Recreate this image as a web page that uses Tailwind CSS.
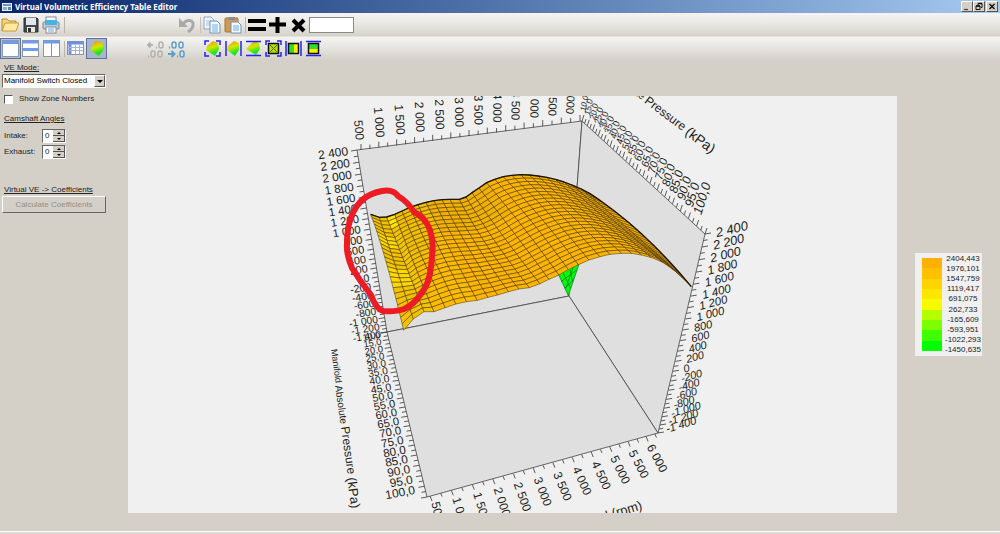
<!DOCTYPE html>
<html lang="en">

<head>
    <meta charset="UTF-8">
    <meta name="viewport" content="width=device-width, initial-scale=1.0">
    <title>Virtual Volumetric Efficiency Table Editor</title>
    <script src="https://cdn.jsdelivr.net/npm/@tailwindcss/browser@4"></script>
</head>

<body class="flex min-h-screen flex-col bg-[#d4d0c8] font-['Liberation_Sans',sans-serif] text-[9px] leading-3 text-[#222]">

    <!-- Title bar -->
    <header class="flex h-[13px] items-center bg-linear-to-r from-[#0a246a] to-[#a6caf0] pr-[2px] pl-[2px]">
        <svg class="mr-[3px] h-[10px] w-[10px]" viewBox="0 0 10 10">
            <rect x="0" y="1" width="10" height="8" fill="#e8eef6" />
            <rect x="1" y="2" width="8" height="2" fill="#6f93c8" />
            <rect x="1" y="5" width="4" height="3" fill="#8fa9cc" />
            <rect x="6" y="5" width="3" height="3" fill="#5b82bb" />
        </svg>
        <h1 class="grow font-['Noto_Sans','Open_Sans',sans-serif] text-[8px] font-bold text-white">Virtual Volumetric Efficiency Table Editor</h1>
        <button aria-label="Minimize" class="h-[11px] w-[12px] border border-t-white border-r-[#555] border-b-[#555] border-l-white bg-[#d4d0c8]">
            <svg class="h-full w-full" viewBox="0 0 10 9"><path d="M2 7.5h4" stroke="#444" stroke-width="1.2" /></svg>
        </button>
        <button aria-label="Restore" class="h-[11px] w-[12px] border border-t-white border-r-[#555] border-b-[#555] border-l-white bg-[#d4d0c8]">
            <svg class="h-full w-full" viewBox="0 0 10 9" fill="none" stroke="#111"><path d="M4 3V1.5h4v4H7M2 4h4v3.500H2z" /><path d="M2 4h4M4 1.500h4" stroke-width="1.500" /></svg>
        </button>
        <button aria-label="Close" class="ml-[1px] h-[11px] w-[12px] border border-t-white border-r-[#555] border-b-[#555] border-l-white bg-[#d4d0c8]">
            <svg class="h-full w-full" viewBox="0 0 10 9" stroke="#111" stroke-width="1.500"><path d="M2.500 2l5 5M7.500 2l-5 5" /></svg>
        </button>
    </header>

    <!-- Edit toolbar -->
    <div class="flex h-6 items-center border-b border-[#e4e1da] bg-linear-to-b from-[#f5f4f1] via-[#e9e7e2] to-[#d6d2ca]">
        <button aria-label="Open" class="ml-[1px] h-[18px] w-[18px]">
            <svg viewBox="0 0 18 18"><path d="M1 15V3h5l2 2h7v3" fill="#f5d67a" stroke="#b98a2c" /><path d="M1 15l3-8h14l-3 8z" fill="#ffe9a0" stroke="#c79a3a" /></svg>
        </button>
        <button aria-label="Save" class="ml-[3px] h-[18px] w-[18px]">
            <svg viewBox="0 0 18 18"><path d="M2 2h13l1 1v13H2z" fill="#45474c" stroke="#2c2d31" /><rect x="4" y="2" width="10" height="7" fill="#dfe6f2" /><rect x="5" y="11" width="8" height="5" fill="#e6e6e6" /><rect x="6" y="12" width="3" height="4" fill="#333" /></svg>
        </button>
        <button aria-label="Print" class="ml-[2px] h-[18px] w-[18px]">
            <svg viewBox="0 0 18 18"><rect x="4" y="1" width="10" height="6" fill="#fff" stroke="#889" /><rect x="1" y="6" width="16" height="7" rx="1" fill="#c3cad4" stroke="#7b8595" /><rect x="3" y="4" width="12" height="5" fill="#45b5e0" /><rect x="4" y="11" width="10" height="6" fill="#fff" stroke="#889" /><path d="M6 13h6M6 15h6" stroke="#6aa5da" /></svg>
        </button>
        <span class="ml-1 h-4 w-px bg-[#b9b5ac]"></span>
        <button aria-label="Undo" class="ml-[113px] h-[18px] w-[18px]">
            <svg viewBox="0 0 18 18"><path d="M4 9C9 2 16 4 15 9c0 3-2 5-5 7" fill="none" stroke="#a9a9a9" stroke-width="3" /><path d="M1 2v9h9z" fill="#a9a9a9" /></svg>
        </button>
        <span class="ml-1 h-4 w-px bg-[#c4c0b8]"></span>
        <button aria-label="Copy" class="ml-[2px] h-[18px] w-[18px]">
            <svg viewBox="0 0 18 18"><path d="M1 1h7l3 3v9H1z" fill="#eef4fb" stroke="#8fa5c0" /><path d="M3 5h6M3 7h6M3 9h6" stroke="#a9c7e6" /><path d="M7 5h7l3 3v9H7z" fill="#f4f9ff" stroke="#7592b4" /><path d="M9 9h6M9 11h6M9 13h6M9 15h6" stroke="#6daee2" /></svg>
        </button>
        <button aria-label="Paste" class="ml-[3px] h-[18px] w-[18px]">
            <svg viewBox="0 0 18 18"><rect x="1" y="2" width="13" height="14" rx="1" fill="#cf9a55" stroke="#a97430" /><rect x="4" y="1" width="7" height="3" fill="#8d8d8d" /><path d="M7 6h7l3 3v8H7z" fill="#f4f9ff" stroke="#7592b4" /><path d="M9 10h6M9 12h6M9 14h6" stroke="#6daee2" /></svg>
        </button>
        <span class="ml-[3px] h-4 w-px bg-[#b9b5ac]"></span>
        <button aria-label="Set equal" class="ml-[2px] h-[18px] w-[18px]">
            <svg viewBox="0 0 18 18"><path d="M0 5h18M0 13h18" stroke="#000" stroke-width="4" /></svg>
        </button>
        <button aria-label="Add" class="ml-[3px] h-[18px] w-[18px]">
            <svg viewBox="0 0 18 18"><path d="M8.500 1v16M0 8.500h17" stroke="#000" stroke-width="4" /></svg>
        </button>
        <button aria-label="Multiply" class="ml-[3px] h-[18px] w-[18px]">
            <svg viewBox="0 0 18 18"><path d="M3 4l11 11M14 4L3 15" stroke="#000" stroke-width="4" /></svg>
        </button>
        <input aria-label="Value" type="text" class="ml-[1px] h-4 w-[45px] border border-[#8a8a8a] bg-white px-1 outline-none">
    </div>

    <!-- View toolbar -->
    <div class="flex h-[23px] items-center bg-linear-to-b from-[#f5f4f1] via-[#e6e4df] to-[#d4d0c8]">
        <button aria-label="Single view" aria-pressed="true" class="h-[21px] w-[21px] border border-[#5d7199] bg-[#b5bfd6] p-[1px]">
            <svg viewBox="0 0 17 17"><rect x=".5" y=".5" width="16" height="16" fill="#fdfdfd" stroke="#8797b5" /><rect x="1" y="1" width="15" height="3" fill="#6f9bea" /></svg>
        </button>
        <button aria-label="Split rows" class="ml-[1px] h-[17px] w-[17px]">
            <svg viewBox="0 0 17 17"><rect x=".5" y=".5" width="16" height="16" fill="#fdfdfd" stroke="#8f96a3" /><path d="M1 2h15M1 9.500h15" stroke="#6f9bea" stroke-width="3" /></svg>
        </button>
        <button aria-label="Split columns" class="ml-1 h-[17px] w-[17px]">
            <svg viewBox="0 0 17 17"><rect x=".5" y=".5" width="16" height="16" fill="#fdfdfd" stroke="#8f96a3" /><path d="M1 2h15" stroke="#6f9bea" stroke-width="3" /><path d="M8.500 1v15" stroke="#8f96a3" /></svg>
        </button>
        <span class="ml-1 h-4 w-px bg-[#b9b5ac]"></span>
        <button aria-label="Table" class="ml-[2px] h-[17px] w-[17px]">
            <svg viewBox="0 0 17 17"><rect x=".5" y="1.500" width="16" height="13" fill="#fff" stroke="#8492b5" /><path d="M1 3h15M3 2v12" stroke="#6f8fe0" stroke-width="3" /><path d="M1 7.500h15M1 10.500h15M8.500 5v9M12.500 5v9" stroke="#a3b2d6" /></svg>
        </button>
        <button aria-label="Surface" aria-pressed="true" class="ml-[2px] h-[21px] w-[21px] border border-[#5d7199] bg-[#a9b4cd] p-[1px]">
            <svg viewBox="0 0 17 17">
                <defs>
                    <linearGradient id="heat" x1="0" y1="0" x2=".3" y2="1"><stop offset=".1" stop-color="#f09a00" /><stop offset=".5" stop-color="#cfe800" /><stop offset=".9" stop-color="#1ee41e" /></linearGradient>
                </defs>
                <path d="M7 1l7 1 2 7-5 7-9-6z" fill="url(#heat)" />
            </svg>
        </button>
        <button aria-label="Fewer decimals" class="ml-10 h-[18px] w-[17px]">
            <svg viewBox="0 0 17 18" fill="none" stroke="#b4b2ad" stroke-width="1.500"><path d="M6 5H1M3.500 2.500L1 5l2.500 2.500M9 7.500h1" stroke-width="2" /><rect x="12" y="2" width="4" height="6" rx="2" /><path d="M1 16.500h1" stroke-width="2" /><rect x="4" y="11" width="4" height="6" rx="2" /><rect x="11" y="11" width="4" height="6" rx="2" /></svg>
        </button>
        <button aria-label="More decimals" class="ml-1 h-[18px] w-[17px]">
            <svg viewBox="0 0 17 18" fill="none" stroke="#5a9fcb" stroke-width="1.500"><path d="M1 7.500h1" stroke-width="2" /><rect x="4" y="2" width="4" height="6" rx="2" /><rect x="11" y="2" width="4" height="6" rx="2" /><path d="M0 14h6M3.500 11L6.500 14l-3 3M9 16.500h1" stroke-width="2" /><rect x="12" y="11" width="4" height="6" rx="2" /></svg>
        </button>
        <button aria-label="Fit surface" class="ml-[19px] h-[17px] w-[17px]">
            <svg viewBox="0 0 17 17"><path d="M9 1l5 2 1 6-4 7-9-6 1-4z" fill="url(#heat)" /><path d="M1 5V1h4M12 1h4v4M16 12v4h-4M5 16H1v-4" fill="none" stroke="#22f" stroke-width="1.500" /></svg>
        </button>
        <button aria-label="Fit surface width" class="ml-1 h-[17px] w-[17px]">
            <svg viewBox="0 0 17 17"><path d="M9 1l5 2v7l-4 6-8-6 1-4z" fill="url(#heat)" /><path d="M1 1v15M16 1v15" stroke="#22f" stroke-width="1.500" /></svg>
        </button>
        <button aria-label="Fit surface height" class="ml-[3px] h-[17px] w-[17px]">
            <svg viewBox="0 0 17 17"><path d="M9 1l5 2 1 6-4 6-10-6z" fill="url(#heat)" /><path d="M1 1.500h15M1 15.500h15" stroke="#22f" stroke-width="1.500" /></svg>
        </button>
        <button aria-label="Fit table" class="ml-[3px] h-[17px] w-[17px]">
            <svg viewBox="0 0 17 17"><rect x="3.500" y="3.500" width="10" height="10" fill="#9be800" stroke="#111" stroke-width="1.500" /><path d="M5 5l7 7M12 5l-7 7" stroke="#a44800" /><path d="M1 5V1h4M12 1h4v4M16 12v4h-4M5 16H1v-4" fill="none" stroke="#22f" stroke-width="1.500" /></svg>
        </button>
        <button aria-label="Fit table width" class="ml-[3px] h-[17px] w-[17px]">
            <svg viewBox="0 0 17 17"><rect x="3.500" y="3.500" width="10" height="10" fill="#fe0" /><path d="M4 4h5v9H4z" fill="#2be02b" /><rect x="3.500" y="3.500" width="10" height="10" fill="none" stroke="#111" stroke-width="1.500" /><path d="M1 1v15M16 1v15" stroke="#22f" stroke-width="1.500" /></svg>
        </button>
        <button aria-label="Fit table height" class="ml-[3px] h-[17px] w-[17px]">
            <svg viewBox="0 0 17 17"><rect x="3.500" y="3.500" width="10" height="10" fill="#fe0" /><path d="M4 4h9v5H4z" fill="#2be02b" /><rect x="3.500" y="3.500" width="10" height="10" fill="none" stroke="#111" stroke-width="1.500" /><path d="M1 1.500h15M1 15.500h15" stroke="#22f" stroke-width="1.500" /></svg>
        </button>
    </div>

    <main class="flex grow">
        <!-- Options -->
        <aside class="w-32 shrink-0 pt-[2px] pl-[2px] text-[8px]">
            <label for="veMode" class="block pl-[2px] underline">VE Mode:</label>
            <div class="relative w-[104px]">
                <select id="veMode" class="block h-[14px] w-full appearance-none border border-t-[#666] border-r-white border-b-white border-l-[#666] bg-white pl-[1px] text-[8px] leading-3 text-black">
                    <option>Manifold Switch Closed</option>
                    <option>Manifold Switch Open</option>
                </select>
                <span class="pointer-events-none absolute top-[1px] right-[1px] flex h-3 w-[11px] items-center justify-center border border-t-white border-r-[#555] border-b-[#555] border-l-white bg-[#d4d0c8]">
                    <svg class="h-[3px] w-[6px]" viewBox="0 0 6 3"><path d="M0 0h6L3 3z" /></svg>
                </span>
            </div>
            <label class="mt-[5px] flex items-center gap-[6px] pl-[2px]">
                <input type="checkbox" class="h-[9px] w-[9px] appearance-none border border-t-[#555] border-r-white border-b-white border-l-[#555] bg-white">
                Show Zone Numbers
            </label>

            <h2 class="mt-2 pl-[2px] underline">Camshaft Angles</h2>
            <div class="mt-1 flex h-[14px] items-center pl-[2px]">
                <label for="intake" class="w-[38px]">Intake:</label>
                <div class="flex h-[14px] w-6 border border-t-[#666] border-r-white border-b-white border-l-[#666] bg-white">
                    <input id="intake" type="text" value="0" class="w-[10px] pl-[2px] outline-none">
                    <div class="flex w-3 flex-col">
                        <button aria-label="Intake up" class="flex h-[6px] items-center justify-center border-r border-b border-[#555] bg-[#d4d0c8]"><svg class="h-[2px] w-1" viewBox="0 0 4 2"><path d="M0 2h4L2 0z" /></svg></button>
                        <button aria-label="Intake down" class="flex h-[6px] items-center justify-center border-r border-b border-[#555] bg-[#d4d0c8]"><svg class="h-[2px] w-1" viewBox="0 0 4 2"><path d="M0 0h4L2 2z" /></svg></button>
                    </div>
                </div>
            </div>
            <div class="mt-[2px] flex h-[14px] items-center pl-[2px]">
                <label for="exhaust" class="w-[38px]">Exhaust:</label>
                <div class="flex h-[14px] w-6 border border-t-[#666] border-r-white border-b-white border-l-[#666] bg-white">
                    <input id="exhaust" type="text" value="0" class="w-[10px] pl-[2px] outline-none">
                    <div class="flex w-3 flex-col">
                        <button aria-label="Exhaust up" class="flex h-[6px] items-center justify-center border-r border-b border-[#555] bg-[#d4d0c8]"><svg class="h-[2px] w-1" viewBox="0 0 4 2"><path d="M0 2h4L2 0z" /></svg></button>
                        <button aria-label="Exhaust down" class="flex h-[6px] items-center justify-center border-r border-b border-[#555] bg-[#d4d0c8]"><svg class="h-[2px] w-1" viewBox="0 0 4 2"><path d="M0 0h4L2 2z" /></svg></button>
                    </div>
                </div>
            </div>

            <h2 class="mt-[25px] pl-[2px] underline">Virtual VE -&gt; Coefficients</h2>
            <button disabled class="h-[17px] w-[104px] border border-t-white border-r-[#666] border-b-[#666] border-l-white text-[#918e87]">Calculate Coefficients</button>
        </aside>

        <!-- 3D chart -->
        <section class="mt-9 grow">
            <svg id="chart" class="block w-full bg-[#f0f0f0] font-['Liberation_Sans',sans-serif]" viewBox="128 96 769 417" fill="#222">
                <g fill="#dfdfdf" stroke="#444" stroke-width=".8">
                    <path d="M357 150L582 121L569 296L387 332z" />
                    <path d="M582 121L705 234L658 433L569 296z" />
                    <path d="M387 332L569 296L658 433L427 497z" />
                </g>
                <path id="ticks" fill="none" stroke="#333" stroke-width=".8" />
                <g id="labels"></g>
                <text transform="translate(334 349) rotate(82)" font-size="9" dominant-baseline="central">Manifold <tspan font-size="10">Absolute </tspan><tspan font-size="12">Pressure </tspan><tspan font-size="13">(kPa)</tspan></text>
                <text transform="translate(714 150) rotate(37)" font-size="10" text-anchor="end" dominant-baseline="central">Manifold Absolute <tspan font-size="12">Pressure </tspan><tspan font-size="14">(kPa)</tspan></text>
                <text transform="translate(643 509) rotate(-17)" font-size="13" text-anchor="end">Engine Speed (rpm)</text>

                <!-- Surface, drawn at three units per pixel -->
                <g transform="translate(360 165) scale(.33333)" stroke-linejoin="round">
                    <path d="M594 325L625 392L658 295z" fill="#0f0" stroke="#063" stroke-width="2" />
                    <path d="M603 350L650 315M614 370L640 345M610 325L632 370M630 315L638 350M640 305L617 370" stroke="#063" stroke-width="2" />
                    <g id="mesh" stroke="#3a2a00" stroke-width="1.500"></g>
                    <path id="rim" fill="none" stroke="#1a1400" stroke-width="4" />
                </g>

                <path d="M382 191Q393 189 398 196Q408 202 414 212Q425 217 430 230Q434 243 432 256Q431 276 426 286Q415 305 404 309Q396 312 383 311Q376 309 371 295Q360 281 352 268Q346 254 347 243Q347 226 352 215Q360 195 382 191z" fill="none" stroke="#ed1c24" stroke-width="6" stroke-linejoin="round" />
            </svg>
        </section>

        <!-- Legend -->
        <aside class="w-[103px] shrink-0 pt-[193px] pl-[18px]">
            <div class="flex w-[67px] gap-[2px] bg-[#f0f0f0] py-[5px] pl-[7px] text-[8px] leading-[10px]">
                <div class="flex w-5 flex-col">
                    <span class="grow bg-[#ffb000]"></span>
                    <span class="grow bg-[#ffc000]"></span>
                    <span class="grow bg-[#ffd400]"></span>
                    <span class="grow bg-[#ffe600]"></span>
                    <span class="grow bg-[#f8fa00]"></span>
                    <span class="grow bg-[#b4ff00]"></span>
                    <span class="grow bg-[#7dff00]"></span>
                    <span class="grow bg-[#3fff00]"></span>
                    <span class="grow bg-[#00ff00]"></span>
                </div>
                <ul class="-my-1 flex h-[101px] grow flex-col justify-between text-center whitespace-nowrap">
                    <li>2404,443</li>
                    <li>1976,101</li>
                    <li>1547,759</li>
                    <li>1119,417</li>
                    <li>691,075</li>
                    <li>262,733</li>
                    <li>-165,609</li>
                    <li>-593,951</li>
                    <li>-1022,293</li>
                    <li>-1450,635</li>
                </ul>
            </div>
        </aside>
    </main>

    <!-- Status bar -->
    <footer class="h-[3px] border-t border-white bg-[#dedbd4]"></footer>

    <script>
        const NS = "http://www.w3.org/2000/svg";

        // quadratic through three values at t = 0, .5, 1
        const quad = (a, m, b, t) => a * (1 - t) * (1 - 2 * t) + 4 * m * t * (1 - t) + b * t * (2 * t - 1);

        function thousands(n) {
            const s = String(Math.abs(n));
            return (n < 0 ? "-" : "") + (s.length > 3 ? s[0] + " " + s.slice(1) : s);
        }

        function range(from, to, step, format) {
            const out = [];
            for (let n = from; step > 0 ? n <= to : n >= to; n += step) out.push(format(n));
            return out;
        }

        const rpm = range(500, 6000, 500, thousands);
        const eff = range(2400, -1400, -200, thousands);
        const map = range(10, 100, 5, n => n + ",0");

        // x, y, angle and size are [first, middle, last]
        const axes = [
            { text: rpm, x: [360, 469, 570], y: [140, 126, 114], angle: [84, 89, 93], size: [12, 12, 11], anchor: "end" },
            { text: eff, x: [348, 365, 381], y: [151, 254, 334], angle: [-8, -9, -9], size: [12, 11, 10], anchor: "end" },
            { text: map, x: [380, 395, 415], y: [335, 403, 490], angle: [-9, -10, -10], size: [9, 11, 12], anchor: "end" },
            { text: rpm, x: [435, 547, 650], y: [502, 475, 445], angle: [75, 68, 62], size: [12, 12, 12], anchor: "start" },
            { text: eff, x: [716, 690, 666], y: [233, 344, 429], angle: [-14, -15, -17], size: [13, 11, 11], anchor: "start", italic: true },
            { text: map, x: [583, 631, 697], y: [111, 155, 214], angle: [-80, -76, -73], size: [8, 10, 13], anchor: "start", italic: true }
        ];

        const labels = document.getElementById("labels");
        for (const axis of axes) {
            axis.text.forEach((word, i) => {
                const t = i / (axis.text.length - 1);
                const at = key => quad(...axis[key], t).toFixed(1);
                const el = document.createElementNS(NS, "text");
                el.setAttribute("transform", `translate(${at("x")} ${at("y")}) rotate(${at("angle")})`);
                el.setAttribute("font-size", at("size"));
                el.setAttribute("text-anchor", axis.anchor);
                el.setAttribute("dominant-baseline", "central");
                if (axis.italic) el.setAttribute("font-style", "italic");
                el.textContent = word;
                labels.appendChild(el);
            });
        }

        // edge start, middle and end, tick direction, number of intervals
        const rulers = [
            { x: [361, 469, 580], y: [150, 136, 121], dx: 0, dy: -6, count: 24 },
            { x: [357, 374, 387], y: [150, 254, 332], dx: -6, dy: 1, count: 38 },
            { x: [387, 405, 427], y: [332, 407, 497], dx: -6, dy: 1, count: 36 },
            { x: [430, 548, 655], y: [496, 464, 434], dx: 2, dy: 5, count: 23 },
            { x: [705, 679, 658], y: [234, 346, 433], dx: 6, dy: -1, count: 38 },
            { x: [582, 636, 705], y: [121, 170, 234], dx: 2, dy: -6, count: 36 }
        ];
        let d = "";
        for (const r of rulers) {
            for (let i = 0; i <= r.count; i++) {
                const t = i / r.count;
                const k = i % 2 ? .7 : 1;
                d += `M${quad(...r.x, t).toFixed(1)} ${quad(...r.y, t).toFixed(1)}l${r.dx * k} ${r.dy * k}`;
            }
        }
        document.getElementById("ticks").setAttribute("d", d);

        // Surface: rear, middle and front profile, 28 points each
        const rear = [[32, 148], [58, 157], [80, 156], [104, 148], [126, 138], [150, 127], [174, 119], [198, 112], [222, 107], [246, 104], [270, 103], [298, 103], [318, 96], [336, 83], [357, 69], [380, 53], [404, 43], [430, 35], [456, 31], [482, 29], [508, 30], [534, 33], [560, 37], [586, 43], [612, 51], [638, 61], [664, 72], [690, 86]];
        const middle = [[78, 290], [106, 300], [138, 302], [158, 285], [184, 272], [212, 262], [240, 254], [268, 250], [296, 247], [324, 246], [352, 243], [380, 240], [408, 233], [436, 222], [464, 206], [492, 190], [520, 176], [548, 165], [576, 156], [604, 151], [632, 149], [660, 150], [688, 154], [716, 160], [744, 168], [774, 179], [806, 193], [846, 208]];
        const front = [[131, 496], [160, 462], [192, 440], [222, 440], [256, 428], [288, 417], [320, 410], [352, 406], [384, 397], [413, 390], [446, 380], [477, 372], [508, 368], [540, 356], [567, 343], [597, 330], [625, 314], [655, 299], [687, 285], [720, 275], [750, 268], [785, 265], [815, 265], [845, 270], [875, 278], [908, 292], [945, 318], [994, 365]];
        const rows = 24;
        const point = (i, j) => [0, 1].map(k => quad(rear[i][k], middle[i][k], front[i][k], j / rows).toFixed(1)).join(" ");

        function color(i, j) {
            if (i < 2) return (j > 4 && j < 8) || (j > 12 && j < 17) ? "#ffd800" : "#f2c200";
            if (i < 3) return j < 3 ? "#ffe400" : "#f4c400";
            if (i < 7) return j < 20 - i * 2 ? "#f3bd00" : "#ffbb00";
            return j < 8 && i < 15 ? "#f2b000" : "#ffb400";
        }

        const mesh = document.getElementById("mesh");
        for (let j = 0; j < rows; j++) {
            for (let i = 0; i < 27; i++) {
                const cell = document.createElementNS(NS, "path");
                cell.setAttribute("d", `M${point(i, j)}L${point(i + 1, j)}L${point(i + 1, j + 1)}L${point(i, j + 1)}z`);
                cell.setAttribute("fill", color(i, j));
                mesh.appendChild(cell);
            }
        }

        // dark outline along the rear profile and down the right edge
        const outline = rear.map(p => p.join(" "));
        for (let j = 1; j <= rows; j++) outline.push(point(27, j));
        document.getElementById("rim").setAttribute("d", "M" + outline.join("L"));
    </script>
</body>

</html>
